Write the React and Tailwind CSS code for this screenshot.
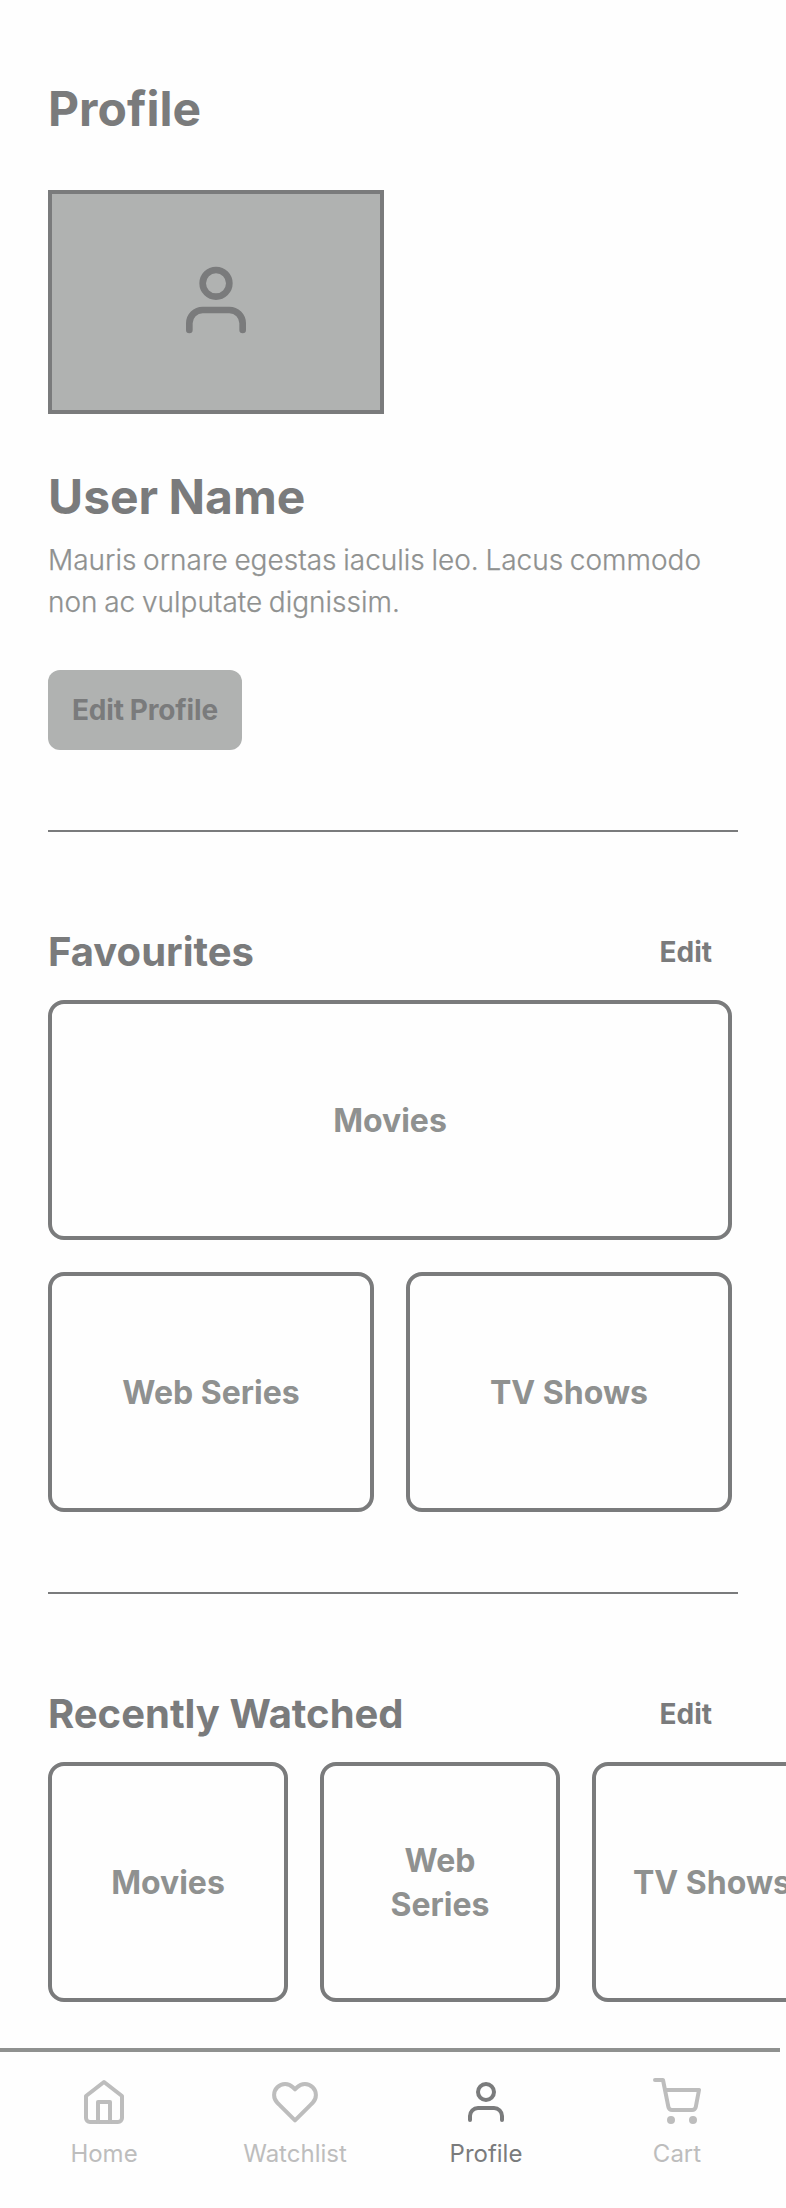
const iconProps = {
  viewBox: '0 0 24 24',
  fill: 'none',
  stroke: 'currentColor',
  strokeWidth: 2,
  strokeLinecap: 'round',
  strokeLinejoin: 'round',
};

function UserIcon({ className }) {
  return (
    <svg {...iconProps} className={className}>
      <path d="M20 21v-2a4 4 0 0 0-4-4H8a4 4 0 0 0-4 4v2" />
      <circle cx="12" cy="7" r="4" />
    </svg>
  );
}

function HomeIcon({ className }) {
  return (
    <svg {...iconProps} className={className}>
      <path d="M3 9l9-7 9 7v11a2 2 0 0 1-2 2H5a2 2 0 0 1-2-2z" />
      <polyline points="9 22 9 12 15 12 15 22" />
    </svg>
  );
}

function HeartIcon({ className }) {
  return (
    <svg {...iconProps} className={className}>
      <path d="M20.84 4.61a5.5 5.5 0 0 0-7.78 0L12 5.67l-1.06-1.06a5.5 5.5 0 0 0-7.78 7.78l1.06 1.06L12 21.23l7.78-7.78 1.06-1.06a5.5 5.5 0 0 0 0-7.78z" />
    </svg>
  );
}

function CartIcon({ className }) {
  return (
    <svg {...iconProps} className={className}>
      <circle cx="9" cy="21" r="1" />
      <circle cx="20" cy="21" r="1" />
      <path d="M1 1h4l2.68 13.39a2 2 0 0 0 2 1.61h9.72a2 2 0 0 0 2-1.61L23 6H6" />
    </svg>
  );
}

function Card({ className = '', children }) {
  return (
    <div
      className={`flex h-60 items-center justify-center rounded-2xl border-4 border-[#7a7b7c] pt-px text-center text-[32px] leading-[44px] font-bold text-[#8f9190] ${className}`}
    >
      {children}
    </div>
  );
}

function SectionHeader({ title }) {
  return (
    <div className="flex h-[88px] items-center justify-between pr-[26px] pb-2 text-[#7a7b7c]">
      <h2 className="mb-px text-[40px] leading-[55px] font-bold">{title}</h2>
      <button className="text-[28px] leading-10 font-bold">Edit</button>
    </div>
  );
}

const tabs = [
  { label: 'Home', Icon: HomeIcon },
  { label: 'Watchlist', Icon: HeartIcon },
  { label: 'Profile', Icon: UserIcon, active: true },
  { label: 'Cart', Icon: CartIcon },
];

export default function App() {
  return (
    <div className="flex h-[2208px] w-[786px] flex-col overflow-hidden bg-[#fefefe] font-['Inter',sans-serif]">
      <main className="flex h-[2048px] shrink-0 flex-col px-12 pt-[79px]">
        <h1 className="text-5xl leading-[59px] font-bold text-[#7a7b7c]">Profile</h1>

        <div className="mt-[52px] flex h-56 w-[336px] shrink-0 justify-center border-4 border-[#7a7b7c] bg-[#b0b2b1] pt-[66px] text-[#7a7b7c]">
          <UserIcon className="size-20" />
        </div>

        <h2 className="mt-[53px] text-5xl leading-[59px] font-bold text-[#7a7b7c] [word-spacing:-1px]">
          User Name
        </h2>
        <p className="mt-[13px] text-[28px] leading-[42px] font-light text-[#8f9190] [-webkit-text-stroke:0.25px_#8f9190] [word-spacing:-1.2px]">
          Mauris ornare egestas iaculis leo. Lacus commodo
          <br />
          non ac vulputate dignissim.
        </p>
        <button className="mt-[47px] h-20 w-[194px] shrink-0 rounded-xl bg-[#b0b2b1] text-[28px] leading-10 font-bold tracking-[-0.15px] whitespace-nowrap text-[#7a7b7c] [word-spacing:-0.6px]">
          Edit Profile
        </button>

        <hr className="mt-20 border-0 border-t-2 border-[#7a7b7c]" />

        <section className="mt-20 w-[690px]">
          <SectionHeader title="Favourites" />
          <div className="grid w-[684px] grid-cols-2 gap-8">
            <Card className="col-span-2">Movies</Card>
            <Card>Web Series</Card>
            <Card>TV Shows</Card>
          </div>
        </section>

        <hr className="mt-20 border-0 border-t-2 border-[#7a7b7c]" />

        <section className="mt-20 w-[690px]">
          <SectionHeader title="Recently Watched" />
          <div className="flex gap-8">
            <Card className="w-60 shrink-0">Movies</Card>
            <Card className="w-60 shrink-0">
              Web
              <br />
              Series
            </Card>
            <Card className="w-60 shrink-0 whitespace-nowrap">TV Shows</Card>
          </div>
        </section>
      </main>

      <nav className="flex h-40 w-[780px] shrink-0 gap-px border-t-4 border-[#8f9190] pt-[26px] pl-[9px]">
        {tabs.map(({ label, Icon, active }) => (
          <a
            key={label}
            className={`flex w-[190px] shrink-0 flex-col items-center ${active ? 'text-[#7a7b7c]' : 'text-[#bdbdbd]'}`}
          >
            <Icon className="size-12" />
            <span className="mt-[11px] text-2xl leading-[33px]">{label}</span>
          </a>
        ))}
      </nav>
    </div>
  );
}
